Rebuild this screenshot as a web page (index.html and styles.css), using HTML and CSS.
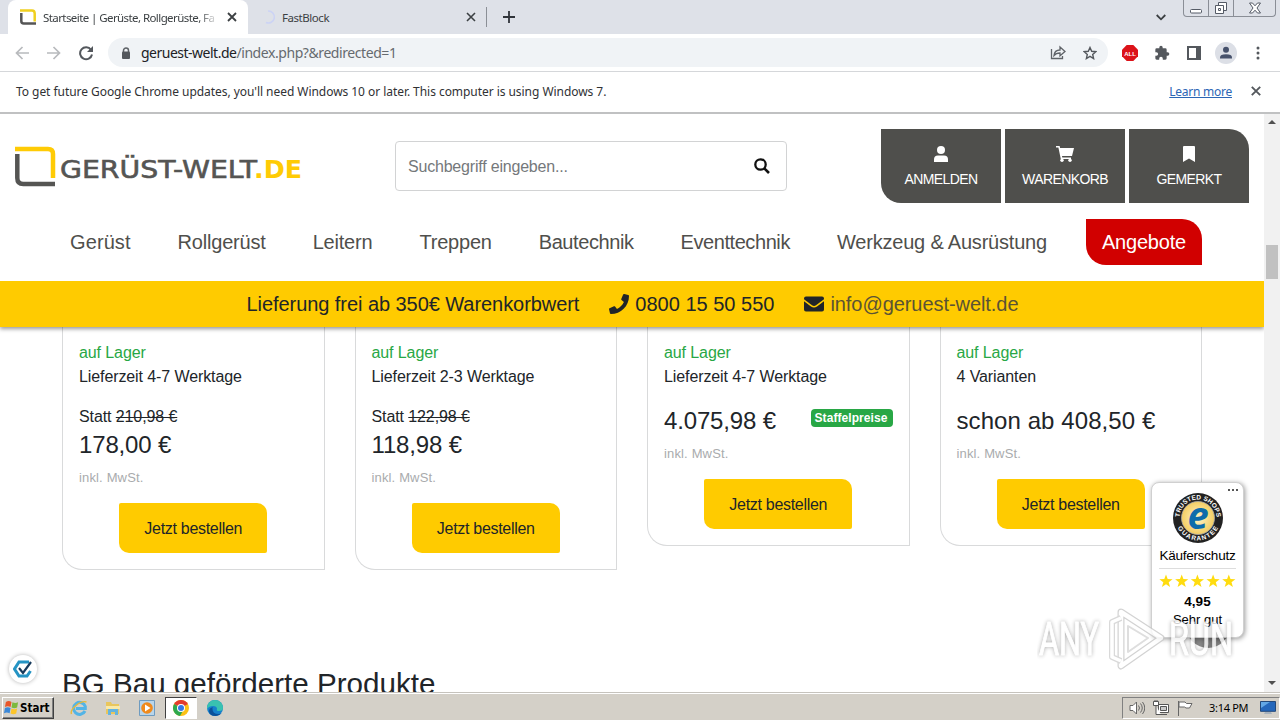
FILE: index.html
```
<!DOCTYPE html>
<html lang="de">
<head>
    <meta charset="UTF-8">
    <meta name="viewport" content="width=device-width, initial-scale=1.0">
    <title>Startseite | Gerüste, Rollgerüste, Fassadengerüste</title>
    <link rel="stylesheet" href="styles.css">
</head>
<body>
    <div class="window">
        <!-- Browser tabs -->
        <div class="tabstrip">
            <div class="tab tab-active">
                <svg class="favicon" width="16" height="16" viewBox="0 0 16 16" fill="none" stroke-width="2.500"><path d="M0 1.500h12q2.700 0 2.700 3v8" stroke="#f0d020"/><path d="M1.300 4v8q0 2.500 2.500 2.500H16" stroke="#555"/></svg>
                <span class="tab-title">Startseite | Gerüste, Rollgerüste, Fa</span>
                <svg class="tab-close" width="10" height="10" viewBox="0 0 10 10"><path d="M1 1l8 8M9 1l-8 8" stroke="#3c4043" stroke-width="1.8"/></svg>
            </div>
            <div class="tab tab-second">
                <svg class="favicon" width="16" height="16" viewBox="0 0 16 16" fill="none"><path d="M8 2a6 6 0 1 1-2 11.500" stroke="#ccd3f5" stroke-width="1.6"/></svg>
                <span class="tab-title">FastBlock</span>
                <svg class="tab-close" width="10" height="10" viewBox="0 0 10 10"><path d="M1 1l8 8M9 1l-8 8" stroke="#3c4043" stroke-width="1.6"/></svg>
            </div>
            <div class="tab-divider"></div>
            <svg class="new-tab" width="12" height="12" viewBox="0 0 12 12"><path d="M6 0v12M0 6h12" stroke="#30343a" stroke-width="1.8"/></svg>
            <svg class="tab-search" width="10" height="7" viewBox="0 0 10 7" fill="none"><path d="M.7 1L5 5.300 9.300 1" stroke="#3c4043" stroke-width="1.8"/></svg>
            <div class="win-controls">
                <span class="win-btn"><svg width="14" height="6" viewBox="0 0 14 6"><rect x="1.500" y="1.500" width="11" height="3.500" rx="1" fill="#fff" stroke="#555b66"/></svg></span>
                <span class="win-btn"><svg width="14" height="14" viewBox="0 0 14 14" fill="#fff" stroke="#555b66"><path d="M4.500 1.500h8v8h-8z"/><path d="M1.500 4.500h8v8h-8z"/><path d="M4.500 7.500h2v2h-2z"/></svg></span>
                <span class="win-btn win-close"><svg width="14" height="12" viewBox="0 0 14 12"><path d="M1.500 1h3L7 3.800 9.500 1h3L9 6l3.500 5h-3L7 8.200 4.500 11h-3L5 6z" fill="#fff" stroke="#555b66"/></svg></span>
            </div>
        </div>

        <!-- Address bar -->
        <div class="toolbar">
            <svg class="nav-icon" width="14" height="14" viewBox="0 0 14 14" fill="none" stroke="#b8babd" stroke-width="1.700"><path d="M14 7H1.500M7.500 1L1.500 7l6 6"/></svg>
            <svg class="nav-icon" width="14" height="14" viewBox="0 0 14 14" fill="none" stroke="#b8babd" stroke-width="1.700"><path d="M0 7h12.500M6.500 1l6 6-6 6"/></svg>
            <svg class="nav-icon" width="16" height="16" viewBox="0 0 16 16"><path d="M13 4.800A6 6 0 1 0 14 9.500" fill="none" stroke="#54585d" stroke-width="2"/><path d="M15 1v6H9z" fill="#54585d"/></svg>
            <div class="omnibox">
                <svg class="lock" width="10" height="12" viewBox="0 0 10 12"><path d="M2.500 5V3.500a2.500 2.500 0 0 1 5 0V5" fill="none" stroke="#5f6368" stroke-width="1.500"/><rect x="1" y="4.500" width="8" height="7.500" rx="1" fill="#54585d"/></svg>
                <span class="url"><span class="host">geruest-welt.de</span><span class="path">/index.php?&amp;redirected=1</span></span>
                <svg class="share" width="16" height="15" viewBox="0 0 16 15" fill="none" stroke="#5f6368" stroke-width="1.300"><path d="M1.500 4v9.500h11V11"/><path d="M4 10.500q.5-5.500 6-5.500V2l5 4.500-5 4.300V8q-4 0-6 2.500z"/></svg>
                <svg width="14" height="14" viewBox="0 0 14 14"><path d="M7 1.500l1.700 3.800 4.100.4-3.100 2.700.9 4.100L7 10.300l-3.600 2.200.9-4.100-3.100-2.700 4.100-.4z" fill="none" stroke="#54585d" stroke-width="1.400"/></svg>
            </div>
            <div class="extensions">
                <svg width="16" height="16" viewBox="0 0 16 16"><path d="M4.700 0h6.600L16 4.700v6.600L11.300 16H4.700L0 11.300V4.700z" fill="#dc1219"/><text class="stop-label" x="8" y="11" text-anchor="middle">ALL</text></svg>
                <svg width="16" height="16" viewBox="0 0 24 24"><path d="M20.500 11H19V7a2 2 0 0 0-2-2h-4V3.500a2.500 2.500 0 0 0-5 0V5H4a2 2 0 0 0-2 2v3.800h1.500a2.700 2.700 0 0 1 0 5.400H2V20a2 2 0 0 0 2 2h3.800v-1.500a2.700 2.700 0 0 1 5.400 0V22H17a2 2 0 0 0 2-2v-4h1.500a2.500 2.500 0 0 0 0-5z" fill="#54585d"/></svg>
                <svg width="16" height="16" viewBox="0 0 16 16"><path d="M1 1h14v14H1z" fill="#54585d"/><path d="M3 3h7v10H3z" fill="#fff"/></svg>
                <svg class="avatar" width="22" height="22" viewBox="0 0 22 22"><circle cx="11" cy="11" r="11" fill="#dcdfe6"/><circle cx="11" cy="7.800" r="3" fill="#46516b"/><path d="M5 16.500v-1q0-3.300 6-3.300t6 3.300v1z" fill="#46516b"/></svg>
                <svg width="4" height="14" viewBox="0 0 4 14" fill="#54585d"><circle cx="2" cy="2" r="1.500"/><circle cx="2" cy="7" r="1.500"/><circle cx="2" cy="12" r="1.500"/></svg>
            </div>
        </div>

        <div class="infobar">
            <span class="info-text">To get future Google Chrome updates, you'll need Windows 10 or later. This computer is using Windows 7.</span>
            <a class="learn-more" href="#">Learn more</a>
            <svg width="10" height="10" viewBox="0 0 10 10"><path d="M.8.8l8.400 8.400M9.200.8L.8 9.200" stroke="#54585d" stroke-width="1.900"/></svg>
        </div>

        <div class="viewport">
            <main class="page">
                <header class="site-header">
                    <div class="header-top">
                        <svg class="logo" width="288" height="42" viewBox="0 0 288 42">
                            <path d="M0 3h33q5 0 5 5v24" fill="none" stroke="#ffcb05" stroke-width="4.500"/>
                            <path d="M2.300 8v24q0 6 6 6H40" fill="none" stroke="#555553" stroke-width="4.500"/>
                            <text class="logo-name" x="45" y="32" textLength="197" lengthAdjust="spacingAndGlyphs">GERÜST-WELT</text>
                            <text class="logo-tld" x="239" y="32" textLength="48" lengthAdjust="spacingAndGlyphs">.DE</text>
                        </svg>
                        <div class="search">
                            <span>Suchbegriff eingeben...</span>
                            <svg width="16" height="16" viewBox="0 0 16 16" fill="none" stroke="#111"><circle cx="6.500" cy="6.500" r="5.200" stroke-width="2.300"/><path d="M10.300 10.300l4.700 4.700" stroke-width="2.600"/></svg>
                        </div>
                        <div class="user-links">
                            <a class="user-link">
                                <svg width="14" height="16" viewBox="0 0 14 16" fill="#fff"><circle cx="7" cy="4" r="4"/><path d="M0 16v-2.500Q0 9.500 4 9.500h6q4 0 4 4V16z"/></svg>
                                <span>ANMELDEN</span>
                            </a>
                            <a class="user-link">
                                <svg width="18" height="16" viewBox="0 0 18 16" fill="#fff"><path d="M0 0h3.600l.5 2H18l-2 8H6l.3 1.400H15V13H4.800L2.400 1.600H0z"/><circle cx="6" cy="14.300" r="1.700"/><circle cx="14" cy="14.300" r="1.700"/></svg>
                                <span>WARENKORB</span>
                            </a>
                            <a class="user-link">
                                <svg width="12" height="16" viewBox="0 0 12 16" fill="#fff"><path d="M0 1Q0 0 1 0h10q1 0 1 1v15l-6-3.500L0 16z"/></svg>
                                <span>GEMERKT</span>
                            </a>
                        </div>
                    </div>
                    <nav class="main-nav">
                        <a class="nav-short">Gerüst</a>
                        <a>Rollgerüst</a>
                        <a>Leitern</a>
                        <a>Treppen</a>
                        <a class="nav-tech">Bautechnik</a>
                        <a class="nav-tech">Eventtechnik</a>
                        <a>Werkzeug &amp; Ausrüstung</a>
                        <a class="offers">Angebote</a>
                    </nav>
                    <div class="contact-bar">
                        <span class="free-shipping">Lieferung frei ab 350€ Warenkorbwert</span>
                        <span class="contact">
                            <svg width="20" height="20" viewBox="0 0 512 512" fill="#212529"><path d="M493.400 24.600l-104-24c-11.300-2.600-22.900 3.300-27.500 13.900l-48 112c-4.200 9.800-1.400 21.300 6.900 28l60.600 49.600c-36 76.700-98.900 140.500-177.200 177.200l-49.600-60.600c-6.800-8.300-18.200-11.100-28-6.900l-112 48C3.900 366.500-2 378.100.6 389.400l24 104C27.100 504.200 36.700 512 48 512c256.100 0 464-207.500 464-464 0-11.200-7.700-20.900-18.600-23.400z"/></svg>
                            0800 15 50 550
                        </span>
                        <span class="contact mail">
                            <svg width="20" height="20" viewBox="0 0 20 20" fill="#212529"><path d="M0 4.500Q0 2.500 2 2.500h16q2 0 2 2v.7l-8 6q-2 1.500-4 0l-8-6z"/><path d="M0 7.200l7 5.300q3 2.200 6 0l7-5.300v8.300q0 2-2 2H2q-2 0-2-2z"/></svg>
                            info@geruest-welt.de
                        </span>
                    </div>
                </header>

                <section class="products">
                    <article class="card">
                        <p class="stock">auf Lager</p>
                        <p>Lieferzeit 4-7 Werktage</p>
                        <p class="old-price">Statt <s>210,98 €</s></p>
                        <div class="price-row"><span class="price">178,00 €</span></div>
                        <p class="tax">inkl. MwSt.</p>
                        <a class="order-btn">Jetzt bestellen</a>
                    </article>
                    <article class="card">
                        <p class="stock">auf Lager</p>
                        <p>Lieferzeit 2-3 Werktage</p>
                        <p class="old-price">Statt <s>122,98 €</s></p>
                        <div class="price-row"><span class="price">118,98 €</span></div>
                        <p class="tax">inkl. MwSt.</p>
                        <a class="order-btn">Jetzt bestellen</a>
                    </article>
                    <article class="card">
                        <p class="stock">auf Lager</p>
                        <p>Lieferzeit 4-7 Werktage</p>
                        <div class="price-row no-old"><span class="price">4.075,98 €</span><span class="tier-badge">Staffelpreise</span></div>
                        <p class="tax">inkl. MwSt.</p>
                        <a class="order-btn">Jetzt bestellen</a>
                    </article>
                    <article class="card">
                        <p class="stock">auf Lager</p>
                        <p>4 Varianten</p>
                        <div class="price-row no-old"><span class="price price-from">schon ab 408,50 €</span></div>
                        <p class="tax">inkl. MwSt.</p>
                        <a class="order-btn">Jetzt bestellen</a>
                    </article>
                </section>

                <h2 class="section-title">BG Bau geförderte Produkte</h2>

                <!-- Floating elements -->
                <div class="consent">
                    <svg width="20" height="20" viewBox="0 0 20 20" fill="none"><path d="M16 3H6L1.500 10 6 17h8l3.500-5" stroke="#2594c4" stroke-width="3"/><path d="M6 9l4 5 8-11" stroke="#173a5c" stroke-width="2.200"/></svg>
                </div>
                <div class="to-top"></div>
                <aside class="trust">
                    <span class="trust-menu"><i></i><i></i><i></i></span>
                    <svg width="50" height="50" viewBox="0 0 50 50">
                        <defs>
                            <radialGradient id="gold"><stop offset="0" stop-color="#fff5c9"/><stop offset="1" stop-color="#f3cd62"/></radialGradient>
                            <path id="ring-top" d="M6.500 25a18.500 18.500 0 0 1 37 0"/>
                            <path id="ring-bottom" d="M2.500 25a22.500 22.500 0 0 0 45 0"/>
                        </defs>
                        <circle cx="25" cy="25" r="25" fill="#222"/>
                        <circle cx="25" cy="25" r="16.500" fill="url(#gold)" stroke="#aaa" stroke-width=".8"/>
                        <text class="seal-text"><textPath href="#ring-top" startOffset="50%" text-anchor="middle" textLength="56">TRUSTED SHOPS</textPath></text>
                        <text class="seal-text"><textPath href="#ring-bottom" startOffset="50%" text-anchor="middle" textLength="50">GUARANTEE</textPath></text>
                        <text class="seal-e" x="25" y="36" text-anchor="middle">e</text>
                    </svg>
                    <span class="trust-name">Käuferschutz</span>
                    <span class="stars">
                        <svg width="78" height="14" viewBox="0 0 78 14" fill="#ffdc0f"><defs><path id="star" d="M7 .5l1.700 4.600 4.900.2-3.900 3 1.400 4.700L7 10.300 2.900 13l1.400-4.700-3.900-3 4.900-.2z"/></defs><use href="#star"/><use href="#star" x="15.700"/><use href="#star" x="31.400"/><use href="#star" x="47.100"/><use href="#star" x="62.800"/></svg>
                    </span>
                    <b>4,95</b>
                    <span class="grade">Sehr gut</span>
                </aside>
                <div class="watermark">
                    <svg width="200" height="66" viewBox="0 0 200 66" fill="none" stroke-linejoin="round">
                        <text class="mark-text" x="2" y="48" textLength="60" lengthAdjust="spacingAndGlyphs">ANY</text>
                        <path d="M84 5l40 26-40 28z" stroke="#c8c8c8" stroke-width="7"/>
                        <path d="M84 5l40 26-40 28z" stroke="#fff" stroke-width="4.500"/>
                        <path d="M84 11l-9 4v35l9 4" stroke="#d0d0d0" stroke-width="6"/>
                        <path d="M84 11l-9 4v35l9 4" stroke="#fff" stroke-width="3.500"/>
                        <path d="M91 19l20 12-20 14z" stroke="#d6d6d6" stroke-width="2"/>
                        <text class="mark-text" x="132" y="48" textLength="64" lengthAdjust="spacingAndGlyphs">RUN</text>
                    </svg>
                </div>
            </main>
            <div class="scrollbar">
                <svg width="8" height="4" viewBox="0 0 8 4"><path d="M0 4l4-4 4 4z" fill="#505050"/></svg>
                <div class="thumb"></div>
                <svg width="8" height="4" viewBox="0 0 8 4"><path d="M0 0l4 4 4-4z" fill="#505050"/></svg>
            </div>
        </div>

        <footer class="taskbar">
            <div class="start">
                <svg width="15" height="15" viewBox="0 0 16 16"><path d="M2 2q3-2 6 0L7 7.500q-3-1.500-6 0z" fill="#e8562a"/><path d="M9 2.500q3 1.500 6 0L14 8q-3 1.500-6 0z" fill="#7cb93e"/><path d="M1 8.500q3-1.500 6 0L6 14q-3-1.500-6 0z" fill="#3b88d8"/><path d="M8 9q3 1.500 6 0l-1 5.500q-3 1.500-6 0z" fill="#fcc52a"/></svg>
                <span>Start</span>
            </div>
            <div class="quick">
                <span class="app"><svg width="18" height="18" viewBox="0 0 18 18" fill="none"><path d="M15 12a6 6 0 1 1 .300-4.500V9.500H6" stroke="#53b4e6" stroke-width="3"/><path d="M1.500 15Q0 11.500 6 6.500T16.500 3" stroke="#e7b93a" stroke-width="1.400"/></svg></span>
                <span class="app"><svg width="16" height="16" viewBox="0 0 16 16"><path d="M1 2h5l1 2h7v10H1z" fill="#e9c65c"/><path d="M1 6h14v3H1z" fill="#f9e9a9"/><path d="M3 15V9h10v6h-3v-3H6v3z" fill="#65b4df"/></svg></span>
                <span class="app"><svg width="16" height="16" viewBox="0 0 16 16"><path d="M.5.500h15v15H.5z" fill="#b9d5ea" stroke="#6e9bc0"/><circle cx="8" cy="8" r="5.800" fill="#f08a1c"/><path d="M6 4.500L11.500 8 6 11.500z" fill="#fff"/></svg></span>
                <span class="app app-active"><svg width="16" height="16" viewBox="0 0 16 16"><circle cx="8" cy="8" r="8" fill="#fbc116"/><path d="M8 8L1.100 4A8 8 0 0 1 14.900 4z" fill="#e33b2e"/><path d="M8 8L1.100 4A8 8 0 0 0 7 16l4-7z" fill="#2da94f"/><circle cx="8" cy="8" r="4" fill="#fff"/><circle cx="8" cy="8" r="3" fill="#3578e5"/></svg></span>
                <span class="app"><svg width="16" height="16" viewBox="0 0 16 16"><circle cx="8" cy="8" r="8" fill="#1681cc"/><path d="M0 8a8 8 0 0 1 16 0q0 3-4 3-3 0-2-2 0-3-4-3T0 9z" fill="#39c2b0"/><path d="M5.500 9q0 5 6 5 2 0 3.500-1-3 3-6 3-7 0-7-5 0-3 4-4-1 1-.5 2z" fill="#0c5199"/></svg></span>
            </div>
            <div class="tray">
                <svg width="16" height="16" viewBox="0 0 16 16" fill="#fff" stroke="#666"><path d="M1 5.500h3L7.500 2v12L4 10.500H1z"/><path d="M9.500 5.500q2 2.500 0 5M11.500 3.500q3.500 4.500 0 9M13.500 2q4.500 6 0 12" fill="none"/></svg>
                <svg width="16" height="16" viewBox="0 0 16 16" fill="#fff" stroke="#555"><path d="M5.500 4.500h10v8h-10z"/><path d="M7.500 6.500h6v4h-6z" fill="#c9c9c9"/><path d="M8 14.500h6M.5 1.500h5v4h-5zM3 5.500v9h5M2 0v2M4 0v2"/></svg>
                <svg width="16" height="16" viewBox="0 0 16 16" fill="#fff" stroke="#666"><path d="M1.500 1v15M2 2h6l1.500 1.500H15L12.500 8H9L7.500 7H2z"/></svg>
                <span class="clock">3:14 PM</span>
                <svg width="16" height="14" viewBox="0 0 16 14"><path d="M.5.500h15v9.800H.5z" fill="#2467bb" stroke="#23497a"/><path d="M1 1h9L1 7z" fill="#62a7e5"/><path d="M5 11h6l1 2H4z" fill="#a7b2bd"/></svg>
            </div>
        </footer>
    </div>
</body>
</html>
```
FILE: styles.css
```
:root {
    --yellow: #ffcb00;
    --dark: #4f4f4c;
    --text: #212529;
    --green: #28a745;
    --border: #d9dadb;
}

* {
    margin: 0;
    padding: 0;
    box-sizing: border-box;
}

body {
    font-family: "Liberation Sans", Arial, sans-serif;
    color: var(--text);
    overflow: hidden;
}

svg {
    display: block;
    flex-shrink: 0;
}

.window {
    display: flex;
    flex-direction: column;
    width: 1280px;
    height: 720px;
    background-color: white;
}

/* Browser chrome */
.tabstrip {
    display: flex;
    align-items: center;
    height: 34px;
    padding-left: 8px;
    background-color: #dee1e8;
    font-family: "Noto Sans", Tahoma, sans-serif;
    font-size: 11.5px;
}

.tab {
    display: flex;
    align-items: center;
    height: 34px;
    padding: 0 11px 0 12px;
    color: #3c4043;
}

.tab-active {
    width: 240px;
    background-color: white;
    border-radius: 8px 8px 0 0;
}

.tab-second {
    width: 238px;
    padding-right: 10px;
}

.tab-title {
    flex: 1;
    margin-left: 7px;
    margin-right: 8px;
    overflow: hidden;
    white-space: nowrap;
    letter-spacing: -0.58px;
}

.tab-active .tab-title {
    -webkit-mask-image: linear-gradient(to right, #000 88%, transparent);
    mask-image: linear-gradient(to right, #000 88%, transparent);
}

.tab-second .tab-title {
    margin-left: 6px;
    letter-spacing: -0.45px;
}

.tab-divider {
    width: 1px;
    height: 20px;
    background-color: #8b8f96;
}

.new-tab {
    margin-left: 16px;
}

.tab-search {
    margin-left: auto;
    margin-right: 17px;
}

.win-controls {
    display: flex;
    align-self: flex-start;
    height: 17px;
    margin-right: 4px;
    border: 1px solid #8a8e96;
    border-top: none;
    border-radius: 0 0 4px 4px;
}

.win-btn {
    display: flex;
    align-items: center;
    justify-content: center;
    width: 25px;
    border-right: 1px solid #8a8e96;
}

.win-btn:first-child {
    padding-top: 5px;
}

.win-close {
    width: 41px;
    border-right: none;
}

.toolbar {
    display: flex;
    align-items: center;
    height: 38px;
    padding-left: 15px;
    border-bottom: 1px solid #d5d7da;
}

.nav-icon {
    margin-right: 18px;
}

.nav-icon:nth-child(2) {
    margin-right: 17px;
}

.nav-icon:nth-child(3) {
    margin-right: 14px;
}

.omnibox {
    display: flex;
    align-items: center;
    width: 1000px;
    height: 29px;
    padding: 0 11px 0 13px;
    border-radius: 15px;
    background-color: #f0f3f6;
}

.url {
    flex: 1;
    margin-left: 10px;
    font-family: "Noto Sans", Tahoma, sans-serif;
    font-size: 14px;
}

.host {
    color: #202124;
    letter-spacing: -0.5px;
}

.path {
    color: #666a6f;
    letter-spacing: -0.43px;
}

.share {
    margin-right: 17px;
}

.extensions {
    display: flex;
    align-items: center;
    margin-left: 14px;
    gap: 16px;
}

.avatar {
    margin: 0 3px 0 -3px;
}

.stop-label {
    font-size: 6px;
    font-weight: bold;
    fill: white;
}

.infobar {
    display: flex;
    align-items: center;
    height: 42px;
    padding: 0 19px 2px 16px;
    border-bottom: 2px solid #c0c1c2;
    font-family: "Noto Sans", Tahoma, sans-serif;
    font-size: 12px;
    letter-spacing: -0.05px;
    color: #303134;
    white-space: nowrap;
}

.learn-more {
    margin-left: auto;
    margin-right: 19px;
    letter-spacing: -0.25px;
    color: #2c66b5;
}

.viewport {
    display: flex;
    height: 578px;
}

/* Shop page */
.page {
    position: relative;
    width: 1264px;
    overflow: hidden;
}

.site-header {
    position: relative;
    height: 213px;
    background-color: white;
    box-shadow: 0 2px 4px rgba(0, 0, 0, 0.4);
}

.header-top {
    display: flex;
    align-items: center;
    padding: 15px 15px 0;
}

.logo {
    margin-top: 2px;
}

.logo-name {
    font-family: "DejaVu Sans", sans-serif;
    font-size: 24.5px;
    fill: #555553;
    stroke: #555553;
    stroke-width: 0.6px;
}

.logo-tld {
    font-family: "DejaVu Sans", sans-serif;
    font-size: 24.5px;
    font-weight: bold;
    fill: #ffcb05;
}

.search {
    display: flex;
    align-items: center;
    justify-content: space-between;
    width: 392px;
    height: 50px;
    margin-left: 92px;
    padding: 0 16px 0 12px;
    border: 1px solid #d2d3d4;
    border-radius: 4px;
    color: #75787b;
    font-size: 16px;
    letter-spacing: -0.2px;
}

.search span {
    padding-top: 1px;
}

.user-links {
    display: flex;
    gap: 4px;
    margin-left: auto;
}

.user-link {
    display: flex;
    flex-direction: column;
    align-items: center;
    width: 120px;
    height: 74px;
    padding-top: 17px;
    gap: 9px;
    background-color: var(--dark);
    color: white;
    font-size: 14px;
    line-height: 16px;
    letter-spacing: -0.6px;
}

.user-link:first-child {
    border-bottom-left-radius: 20px;
}

.user-link:last-child {
    border-top-right-radius: 20px;
}

.main-nav {
    display: flex;
    justify-content: space-between;
    margin: 16px 62px;
    font-size: 20px;
    line-height: 46px;
    letter-spacing: -0.2px;
    color: var(--dark);
    white-space: nowrap;
}

.main-nav a {
    padding: 0 8px;
}

.main-nav .nav-short {
    letter-spacing: 0.1px;
}

.main-nav .nav-tech {
    letter-spacing: -0.42px;
}

.main-nav .offers {
    padding: 0 16px;
    border-radius: 0 20px 0 20px;
    background-color: #d10000;
    color: white;
}

.contact-bar {
    display: flex;
    justify-content: center;
    gap: 30px;
    height: 46px;
    padding-left: 1px;
    background-color: var(--yellow);
    font-size: 20px;
    line-height: 46px;
}

.free-shipping {
    letter-spacing: -0.06px;
}

.contact {
    display: flex;
    align-items: center;
    gap: 6px;
}

.mail {
    letter-spacing: -0.06px;
    color: #5b5334;
}

.products {
    display: grid;
    grid-template-columns: repeat(4, 1fr);
    align-items: start;
    gap: 30px;
    width: 1140px;
    margin: 0 auto;
}

.card {
    display: flex;
    flex-direction: column;
    padding: 14px 16px 16px;
    border: 1px solid var(--border);
    border-top: none;
    border-bottom-left-radius: 20px;
    font-size: 16px;
    line-height: 24px;
    letter-spacing: -0.1px;
}

.stock {
    color: var(--green);
}

.old-price {
    margin-top: 16px;
}

.price-row {
    display: flex;
    align-items: center;
    justify-content: space-between;
    height: 33px;
    padding-bottom: 2px;
}

.no-old {
    margin-top: 16px;
}

.price {
    font-size: 24px;
    letter-spacing: -0.15px;
}

.price-from {
    letter-spacing: 0.08px;
}

.tier-badge {
    padding: 0 5px 0 4px;
    margin-bottom: 6px;
    border-radius: 4px;
    background-color: var(--green);
    color: white;
    font-size: 12px;
    font-weight: bold;
    line-height: 18px;
    letter-spacing: 0.07px;
}

.tax {
    height: 41px;
    padding-top: 4px;
    color: #a9abad;
    font-size: 13px;
    letter-spacing: 0.15px;
}

.order-btn {
    align-self: center;
    width: 148px;
    height: 50px;
    padding-top: 1px;
    border-radius: 2px 10px 2px 10px;
    background-color: var(--yellow);
    line-height: 50px;
    text-align: center;
    letter-spacing: -0.3px;
}

.section-title {
    margin: 96px 0 0 62px;
    font-size: 29.6px;
    font-weight: normal;
    line-height: 36px;
}

/* Overlays */
.consent {
    position: absolute;
    left: 9px;
    top: 541px;
    display: flex;
    align-items: center;
    justify-content: center;
    width: 28px;
    height: 28px;
    border-radius: 50%;
    background-color: white;
    box-shadow: 0 0 4px rgba(0, 0, 0, 0.3);
}

.to-top {
    position: absolute;
    left: 1186px;
    top: 490px;
    width: 44px;
    height: 44px;
    border-radius: 50%;
    background-color: #888;
}

.trust {
    position: absolute;
    left: 1151px;
    top: 368px;
    display: flex;
    flex-direction: column;
    align-items: center;
    width: 93px;
    height: 156px;
    padding-top: 10px;
    border: 1px solid #d0d0d0;
    border-radius: 8px;
    background-color: white;
    box-shadow: 1px 1px 5px rgba(0, 0, 0, 0.4);
    color: black;
    font-size: 13.5px;
    line-height: 18px;
}

.trust-menu {
    position: absolute;
    right: 5px;
    top: 6px;
    display: flex;
    gap: 2px;
}

.trust-menu i {
    width: 2px;
    height: 2px;
    background-color: #555;
}

.seal-text {
    font-size: 6.5px;
    font-weight: bold;
    fill: white;
}

.seal-e {
    font-family: "Open Sans", sans-serif;
    font-size: 38px;
    font-style: italic;
    font-weight: bold;
    fill: #0d6cab;
}

.trust-name {
    margin-top: 4px;
    white-space: nowrap;
    letter-spacing: -0.25px;
}

.stars {
    width: 77px;
    margin-top: 3px;
    padding-top: 5px;
    padding-bottom: 5px;
    border-top: 1px solid #ddd;
}

.grade {
    font-size: 13px;
}

.watermark {
    position: absolute;
    left: 1037px;
    top: 493px;
    opacity: 0.8;
}

.mark-text {
    font-family: Roboto, sans-serif;
    font-size: 46px;
    fill: white;
    stroke: white;
    stroke-width: 1px;
    filter: drop-shadow(0 0 2px rgba(0, 0, 0, 0.4));
}

/* Scrollbar */
.scrollbar {
    display: flex;
    flex-direction: column;
    align-items: center;
    width: 16px;
    padding: 6px 0 7px;
    background-color: #f1f1f1;
}

.thumb {
    width: 12px;
    height: 34px;
    margin-top: 121px;
    margin-bottom: auto;
    background-color: #c1c1c1;
}

/* Windows taskbar */
.taskbar {
    display: flex;
    align-items: center;
    height: 28px;
    padding: 2px 0 0 2px;
    border-top: 1px solid #c6c3bd;
    background-color: #d4d0c8;
    box-shadow: inset 0 1px white;
}

.start {
    display: flex;
    align-items: center;
    gap: 1px;
    width: 52px;
    height: 22px;
    padding-left: 1px;
    border: 1px solid;
    border-color: white #404040 #404040 white;
    box-shadow: inset -1px -1px #808080;
    color: black;
    font-family: "DejaVu Sans Condensed", "DejaVu Sans", sans-serif;
    font-size: 11.5px;
    font-weight: bold;
}

.quick {
    display: flex;
    gap: 2px;
    margin-left: 9px;
}

.app {
    display: flex;
    align-items: center;
    justify-content: center;
    width: 32px;
    height: 22px;
}

.app-active {
    border: 1px solid;
    border-color: #404040 white white #404040;
    background-color: white;
}

.tray {
    display: flex;
    align-items: center;
    width: 158px;
    height: 22px;
    margin-left: auto;
    padding-left: 6px;
    gap: 8px;
    border: 1px solid;
    border-color: #808080 white white #808080;
}

.clock {
    width: 43px;
    margin-left: 8px;
    color: black;
    font-family: "Noto Sans", Tahoma, sans-serif;
    font-size: 11px;
    letter-spacing: -0.3px;
    white-space: nowrap;
}
```
